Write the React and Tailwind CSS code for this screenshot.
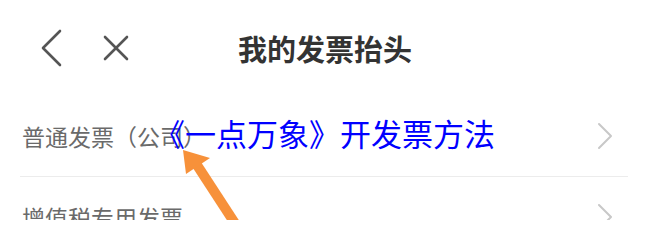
import React from 'react';

const cjk = { fontFamily: '"Noto Sans CJK SC", "Noto Sans", sans-serif' };

const Chevron = () => (
  <svg width="18" height="28" viewBox="0 0 18 28" fill="none" stroke="#c8c8c8" strokeWidth="2" strokeLinecap="round" strokeLinejoin="round">
    <polyline points="3,2 15,14 3,26" />
  </svg>
);

const Row = ({ label, divider }) => (
  <div>
    <div className="h-[80px] flex items-center justify-between pl-[22px] pr-[36px]">
      <span className="text-[23px] leading-none text-[#6a6a6a]" style={cjk}>{label}</span>
      <Chevron />
    </div>
    {divider && <div className="ml-[20px] mr-[22px] h-px bg-[#ececec]" />}
  </div>
);

export default function App() {
  return (
    <div className="relative w-[650px] h-[220px] bg-white overflow-hidden" style={cjk}>
      {/* header */}
      <div className="relative h-[96px] flex items-center">
        <div className="flex items-center pl-[40px] gap-[40px]">
          <svg width="22" height="38" viewBox="0 0 22 38" fill="none" stroke="#555" strokeWidth="2.6" strokeLinecap="round" strokeLinejoin="round">
            <polyline points="20,2 3,19 20,36" />
          </svg>
          <svg width="28" height="28" viewBox="0 0 28 28" fill="none" stroke="#555" strokeWidth="2.6" strokeLinecap="round">
            <line x1="3" y1="3" x2="25" y2="25" />
            <line x1="25" y1="3" x2="3" y2="25" />
          </svg>
        </div>
        <div className="absolute inset-0 flex items-center justify-center">
          <span className="text-[29px] leading-none font-bold text-[#333]">我的发票抬头</span>
        </div>
      </div>

      <Row label="普通发票（公司）" divider />
      <Row label="增值税专用发票" />

      {/* caption overlay */}
      <div className="absolute left-[154px] top-[117px] text-[31px] leading-none text-[#0000ff]">
        《一点万象》开发票方法
      </div>

      {/* orange arrow */}
      <svg className="absolute inset-0" width="650" height="220" viewBox="0 0 650 220">
        <line x1="195" y1="162" x2="238" y2="228" stroke="#f7913a" strokeWidth="10" />
        <polygon points="183,150 210,158 186,174" fill="#f7913a" />
      </svg>
    </div>
  );
}
